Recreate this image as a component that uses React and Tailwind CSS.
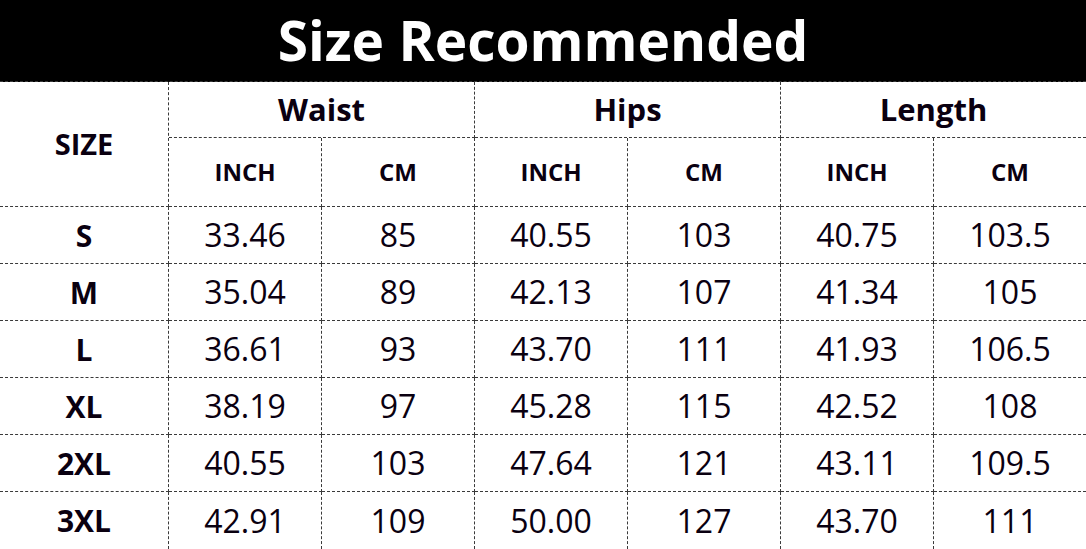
import React from 'react';

const rows = [
  ['S', '33.46', '85', '40.55', '103', '40.75', '103.5'],
  ['M', '35.04', '89', '42.13', '107', '41.34', '105'],
  ['L', '36.61', '93', '43.70', '111', '41.93', '106.5'],
  ['XL', '38.19', '97', '45.28', '115', '42.52', '108'],
  ['2XL', '40.55', '103', '47.64', '121', '43.11', '109.5'],
  ['3XL', '42.91', '109', '50.00', '127', '43.70', '111'],
];

const groups = ['Waist', 'Hips', 'Length'];

const line = 'border-dashed border-[#3a3a3a]';

const App = () => {
  return (
    <div
      className="w-[1086px] h-[549px] bg-white text-[#0a0010] overflow-hidden"
      style={{ fontFamily: '"Open Sans", "Noto Sans", sans-serif' }}
    >
      {/* title bar */}
      <div className={`h-[82px] bg-black border-b ${line} flex items-center justify-center`}>
        <h1 className="text-white font-bold text-[55px] leading-none -mt-[2px]">Size Recommended</h1>
      </div>

      {/* table */}
      <div className="grid grid-cols-[169px_repeat(5,153px)_152px] grid-rows-[56px_69px_repeat(6,57px)]">
        <div className={`row-span-2 border-r border-b ${line} flex items-center justify-center font-bold text-[29px]`}>
          SIZE
        </div>
        {groups.map((g, i) => (
          <div
            key={g}
            className={`col-span-2 border-b ${i < 2 ? 'border-r' : ''} ${line} flex items-center justify-center font-bold text-[31px]`}
          >
            {g}
          </div>
        ))}
        {[0, 1, 2, 3, 4, 5].map((i) => (
          <div
            key={i}
            className={`border-b ${i < 5 ? 'border-r' : ''} ${line} flex items-center justify-center font-bold text-[24px]`}
          >
            {i % 2 === 0 ? 'INCH' : 'CM'}
          </div>
        ))}
        {rows.map((r, ri) =>
          r.map((cell, ci) => (
            <div
              key={ri + '-' + ci}
              className={`${ri < 5 ? 'border-b' : ''} ${ci < 6 ? 'border-r' : ''} ${line} flex items-center justify-center ${
                ci === 0 ? 'font-bold text-[30px]' : 'text-[32px]'
              }`}
            >
              {cell}
            </div>
          ))
        )}
      </div>
    </div>
  );
};

export default App;
